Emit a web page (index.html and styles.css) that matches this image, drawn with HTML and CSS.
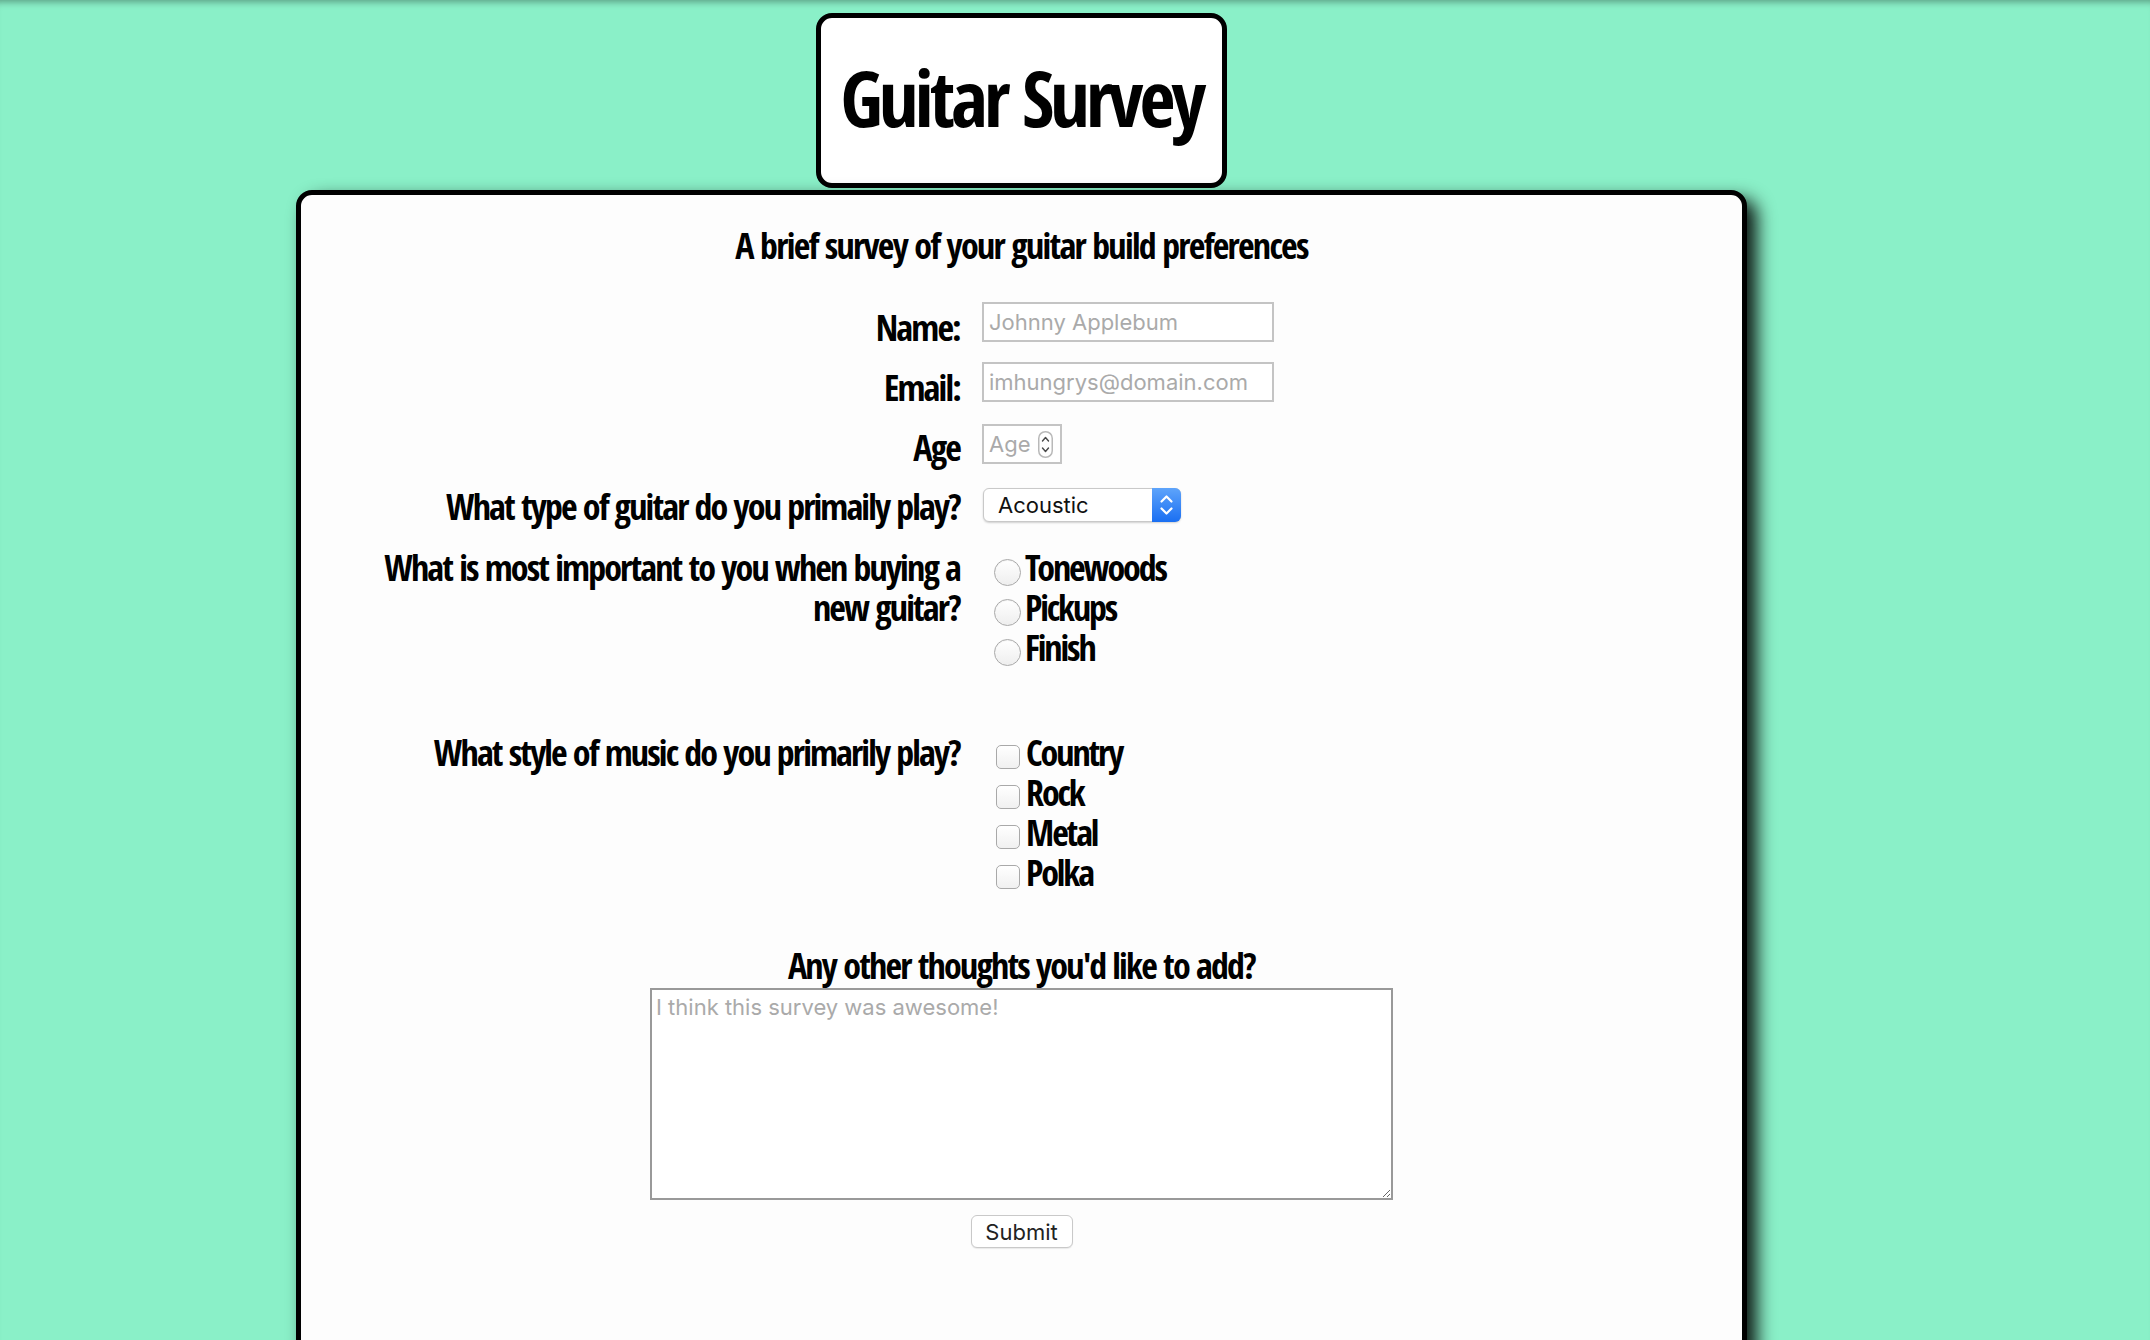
FILE: index.html
```html
<!DOCTYPE html>
<html lang="en">
<head>
<meta charset="utf-8">
<title>Guitar Survey</title>
<link rel="stylesheet" href="styles.css">
</head>
<body>
<div class="page">
  <header class="title-box">
    <h1 class="title">Guitar Survey</h1>
  </header>
  <main class="card">
    <p class="subtitle">A brief survey of your guitar build preferences</p>
    <form class="survey">
      <div class="row row-end row-name">
        <label class="q q-inline" for="name">Name:</label>
        <input class="field field-text" id="name" type="text" placeholder="Johnny Applebum">
      </div>
      <div class="row row-end row-email">
        <label class="q q-inline" for="email">Email:</label>
        <input class="field field-text" id="email" type="email" placeholder="imhungrys@domain.com">
      </div>
      <div class="row row-end row-age">
        <label class="q q-inline q-age" for="age">Age</label>
        <span class="age-box">
          <input class="age-input" id="age" type="number" placeholder="Age">
          <svg class="spinner" width="15" height="27" viewBox="0 0 15 27"><rect x="0.75" y="0.75" width="13.5" height="25.5" rx="6.5" fill="#fff" stroke="#b9b9b9" stroke-width="1.5"/><path d="M4.5 10 L7.5 6.5 L10.5 10" fill="none" stroke="#4a4a4a" stroke-width="1.4" stroke-linecap="round" stroke-linejoin="round"/><path d="M4.5 17 L7.5 20.5 L10.5 17" fill="none" stroke="#4a4a4a" stroke-width="1.4" stroke-linecap="round" stroke-linejoin="round"/></svg>
        </span>
      </div>
      <div class="row row-end row-select">
        <label class="q q-inline q-select" for="type">What type of guitar do you primaily play?</label>
        <span class="select-wrap">
          <select class="select" id="type">
            <option>Acoustic</option>
            <option>Electric</option>
            <option>Bass</option>
          </select>
          <span class="select-arrow"><svg width="29" height="34" viewBox="0 0 29 34"><path d="M9.5 13.5 L14.5 8.5 L19.5 13.5" fill="none" stroke="#fff" stroke-width="2.2" stroke-linecap="round" stroke-linejoin="round"/><path d="M9.5 20.5 L14.5 25.5 L19.5 20.5" fill="none" stroke="#fff" stroke-width="2.2" stroke-linecap="round" stroke-linejoin="round"/></svg></span>
        </span>
      </div>
      <div class="row row-top row-radio">
        <p class="q">What is most important to you when buying a<br>new guitar?</p>
        <div class="options">
          <label class="opt"><input class="radio" type="radio" name="important">Tonewoods</label>
          <label class="opt"><input class="radio" type="radio" name="important">Pickups</label>
          <label class="opt"><input class="radio" type="radio" name="important">Finish</label>
        </div>
      </div>
      <div class="row row-top row-check">
        <p class="q">What style of music do you primarily play?</p>
        <div class="options">
          <label class="opt"><input class="check" type="checkbox">Country</label>
          <label class="opt"><input class="check" type="checkbox">Rock</label>
          <label class="opt"><input class="check" type="checkbox">Metal</label>
          <label class="opt"><input class="check" type="checkbox">Polka</label>
        </div>
      </div>
      <h2 class="thoughts">Any other thoughts you'd like to add?</h2>
      <textarea class="comments" placeholder="I think this survey was awesome!"></textarea>
      <button class="submit" type="submit">Submit</button>
    </form>
  </main>
</div>
</body>
</html>
```

FILE: styles.css
```css
html, body {
  overflow: hidden;
}

body {
  margin: 0;
  min-height: 100vh;
  background: #8af0c8;
  box-shadow: inset 0 8px 7px -6px rgba(0, 0, 0, 0.35);
  font-family: "Open Sans Condensed", "Open Sans", "Liberation Sans Narrow", sans-serif;
  font-stretch: 75%;
  font-weight: 800;
  color: #000;
}

.page {
  width: 2043px;
  display: flex;
  flex-direction: column;
  align-items: center;
  padding-top: 13px;
}

.title-box {
  width: 411px;
  height: 175px;
  box-sizing: border-box;
  border: 5px solid #000;
  border-radius: 16px;
  background: #fff;
  display: flex;
  align-items: center;
  justify-content: center;
  padding-bottom: 8px;
}

.title {
  margin: 0;
  font-size: 78px;
  line-height: 1;
  letter-spacing: -3.8px;
  font-weight: 800;
  white-space: nowrap;
}

.card {
  width: 1451px;
  height: 1180px;
  box-sizing: border-box;
  margin-top: 2px;
  border: 5px solid #000;
  border-radius: 16px;
  background: #fdfdfd;
  box-shadow: 10px 9px 18px rgba(0, 0, 0, 0.9);
}

.subtitle {
  margin: 31px 0 0;
  text-align: center;
  font-size: 36px;
  line-height: 40px;
  letter-spacing: -1.7px;
}

.survey {
  display: flex;
  flex-direction: column;
  margin-top: 36px;
}

.row {
  display: flex;
}

.row-end {
  align-items: flex-end;
}

.row-top {
  align-items: flex-start;
}

.row-email {
  margin-top: 20px;
}

.row-age {
  margin-top: 22px;
}

.row-select {
  margin-top: 23px;
}

.row-radio {
  margin-top: 26px;
}

.row-check {
  margin-top: 65px;
}

.q {
  flex: none;
  width: 659px;
  margin: 0 22px 0 0;
  text-align: right;
  font-size: 36px;
  line-height: 40px;
  letter-spacing: -1.85px;
  white-space: nowrap;
}

.q-inline {
  margin-bottom: -6px;
}

.q-age {
  margin-bottom: -4px;
}

.q-select {
  margin-bottom: -5px;
}

.field {
  box-sizing: border-box;
  height: 40px;
  border: 2px solid #c4c4c4;
  background: #fff;
  font-family: Inter, "Liberation Sans", sans-serif;
  font-stretch: normal;
  font-weight: 400;
  font-size: 22px;
  padding: 0 5px;
  color: #222;
  outline: none;
}

.field-text {
  width: 292px;
}

.field::placeholder,
.age-input::placeholder,
.comments::placeholder {
  color: #aaaaaa;
}

.age-box {
  box-sizing: border-box;
  width: 80px;
  height: 40px;
  border: 2px solid #c4c4c4;
  background: #fff;
  display: flex;
  align-items: center;
  padding: 0 10px 0 5px;
}

.age-input {
  width: 44px;
  border: none;
  padding: 0;
  outline: none;
  background: transparent;
  font-family: Inter, "Liberation Sans", sans-serif;
  font-stretch: normal;
  font-weight: 400;
  font-size: 22px;
  -moz-appearance: textfield;
}

.age-input::-webkit-inner-spin-button,
.age-input::-webkit-outer-spin-button {
  -webkit-appearance: none;
  margin: 0;
}

.spinner {
  flex: none;
  margin-left: 5px;
}

.select-wrap {
  position: relative;
  display: inline-block;
  width: 198px;
  height: 34px;
  margin-left: 1px;
}

.select {
  -webkit-appearance: none;
  appearance: none;
  box-sizing: border-box;
  width: 198px;
  height: 34px;
  border: 1px solid #c9c9c9;
  border-radius: 6px;
  background: #fff;
  box-shadow: 0 1px 2px rgba(0, 0, 0, 0.18);
  padding: 0 0 0 14px;
  font-family: Inter, "Liberation Sans", sans-serif;
  font-stretch: normal;
  font-weight: 400;
  font-size: 22px;
  color: #111;
  outline: none;
}

.select-arrow {
  position: absolute;
  top: 0;
  right: 0;
  width: 29px;
  height: 34px;
  border-radius: 0 6px 6px 0;
  background: linear-gradient(#5ea4fb, #1a6ff2);
  pointer-events: none;
  display: flex;
}

.options {
  display: flex;
  flex-direction: column;
}

.opt {
  display: block;
  height: 40px;
  font-size: 36px;
  line-height: 40px;
  letter-spacing: -2.1px;
  white-space: nowrap;
}

.radio {
  -webkit-appearance: none;
  appearance: none;
  box-sizing: border-box;
  width: 27px;
  height: 27px;
  margin: 0 4px 0 12px;
  border: 1.5px solid #a9a9a9;
  border-radius: 50%;
  background: linear-gradient(#ffffff, #eeeeee);
  box-shadow: inset 0 1px 1px rgba(0, 0, 0, 0.05);
  vertical-align: -5px;
}

.check {
  -webkit-appearance: none;
  appearance: none;
  box-sizing: border-box;
  width: 24px;
  height: 24px;
  margin: 0 6px 0 14px;
  border: 1.5px solid #a9a9a9;
  border-radius: 5px;
  background: linear-gradient(#ffffff, #f0f0f0);
  vertical-align: -3px;
}

.thoughts {
  margin: 53px 0 0;
  text-align: center;
  font-size: 36px;
  line-height: 40px;
  letter-spacing: -1.8px;
  font-weight: 800;
}

.comments {
  display: block;
  box-sizing: border-box;
  width: 743px;
  height: 212px;
  margin: 2px auto 0;
  border: 2px solid #999;
  padding: 4px 4px;
  background: #fff;
  font-family: Inter, "Liberation Sans", sans-serif;
  font-stretch: normal;
  font-weight: 400;
  font-size: 22px;
  outline: none;
}

.submit {
  display: block;
  align-self: center;
  box-sizing: border-box;
  width: 102px;
  height: 33px;
  margin-top: 15px;
  border: 1px solid #c9c9c9;
  border-radius: 6px;
  background: #fff;
  box-shadow: 0 1px 1px rgba(0, 0, 0, 0.08);
  font-family: Inter, "Liberation Sans", sans-serif;
  font-stretch: normal;
  font-weight: 400;
  font-size: 22px;
  color: #222;
  padding: 0;
}
```
